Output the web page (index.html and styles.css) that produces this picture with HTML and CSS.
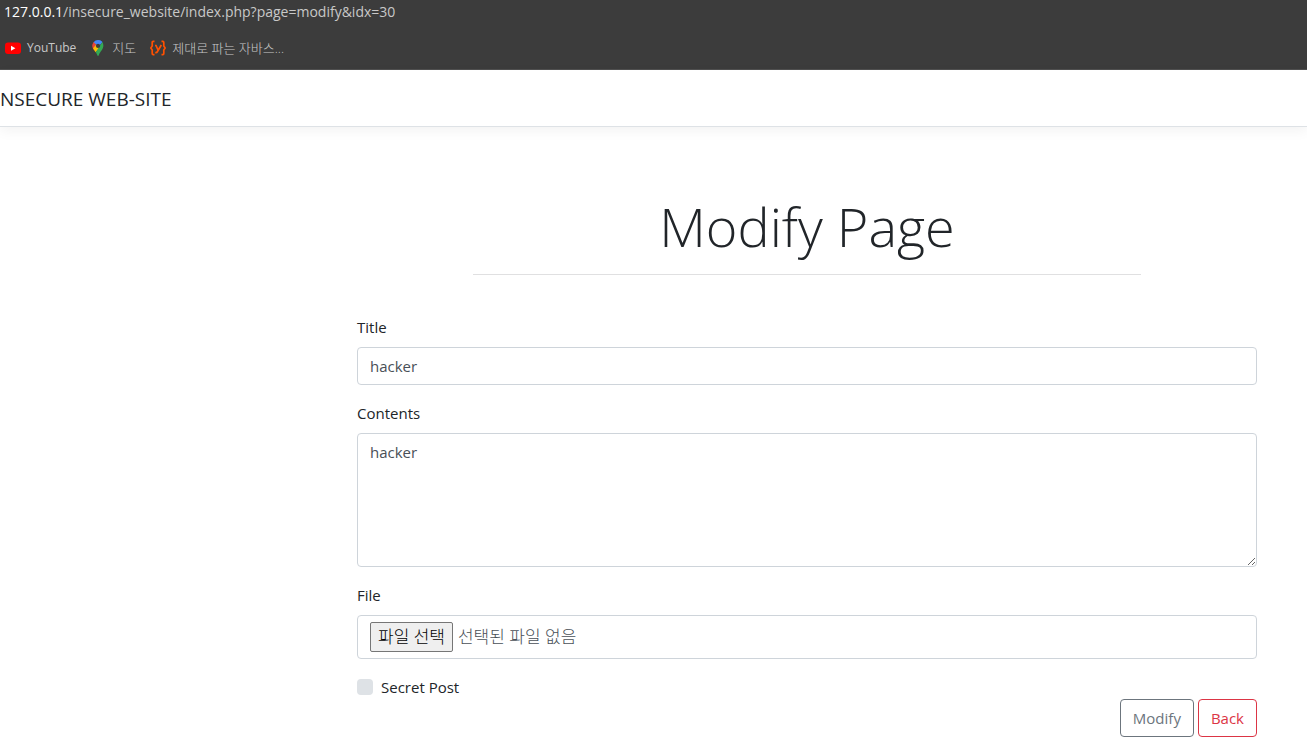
FILE: index.html
```html
<!DOCTYPE html>
<html lang="ko">
<head>
<meta charset="utf-8">
<title>Modify Page</title>
<link rel="stylesheet" href="styles.css">
</head>
<body>
<header class="browser">
  <div class="address"><span class="host">127.0.0.1</span>/insecure_website/index.php?page=modify&amp;idx=30</div>
  <nav class="bookmarks">
    <a class="bookmark" href="#">
      <svg width="16" height="16" viewBox="0 0 16 16" aria-hidden="true"><rect y="2.5" width="16" height="11.5" rx="3" fill="#f00"/><path d="M6 5.8v5l4.4-2.5z" fill="#fff"/></svg>
      YouTube</a>
    <a class="bookmark korean" href="#">
      <svg width="16" height="16" viewBox="0 0 16 16" aria-hidden="true">
        <path d="M3.6 2.3 8 5.5 4 10C3 8.600 2.500 7.500 2.500 5.900A5.500 5.500 0 0 1 3.600 2.300z" fill="#ea4335"/>
        <path d="M3.600 2.300A5.600 5.600 0 0 1 12.300 2L6 8.500z" fill="#4285f4"/>
        <path d="M3.600 2.300 6.300 4.600 3.100 8.400A6 6 0 0 1 3.600 2.300z" fill="#ea4335"/>
        <path d="M3 8.300 6.300 4.600 9.700 7.700 5.700 12.200C4.700 10.800 3.600 9.600 3 8.300z" fill="#fbbc04"/>
        <path d="M12.300 2C14.200 5 13.300 8.200 11.700 10.300 10 12.500 9.300 13.500 8.800 15.200Q8 16.800 7.300 15.200C7 14 6.400 13.100 5.700 12.200z" fill="#34a853"/>
        <path d="M8 .2Q11 .3 12.300 2L9.500 5.500 6.300 4.600z" fill="#4285f4"/>
        <circle cx="8" cy="5.900" r="2.100" fill="#3d3d3d"/>
      </svg>
      지도</a>
    <a class="bookmark korean" href="#">
      <svg width="16" height="16" viewBox="0 0 16 16" fill="none" stroke="#ff5000" stroke-width="1.700" aria-hidden="true"><path d="M4.500 1.300H3.200Q2.200 1.300 2.200 2.500V6L.8 8l1.400 2v3.500q0 1.200 1 1.200h1.300M11.500 1.300h1.300q1 0 1 1.200V6l1.400 2-1.400 2v3.500q0 1.200-1 1.200h-1.300M5 5.500h1l2 4.300M11.300 5 7.500 11.500q-.7 1.300-2.300 1"/></svg>
      제대로 파는 자바스...</a>
  </nav>
</header>
<div class="navbar"><a class="brand" href="#">NSECURE WEB-SITE</a></div>
<main class="page">
  <h1 class="heading">Modify Page</h1>
  <hr class="rule">
  <form class="form">
    <div class="field">
      <label for="title">Title</label>
      <input class="control" id="title" type="text" value="hacker">
    </div>
    <div class="field">
      <label for="contents">Contents</label>
      <textarea class="control contents" id="contents">hacker</textarea>
    </div>
    <div class="field">
      <label for="file">File</label>
      <label class="control picker">
        <input class="picker-input" id="file" type="file">
        <span class="picker-button">파일 선택</span>
        <span>선택된 파일 없음</span>
      </label>
    </div>
    <div class="check">
      <input class="checkbox" id="secret" type="checkbox">
      <label for="secret">Secret Post</label>
    </div>
    <div class="actions">
      <button class="button" type="submit">Modify</button>
      <button class="button danger" type="button">Back</button>
    </div>
  </form>
</main>
</body>
</html>
```

FILE: styles.css
```css
* {
  box-sizing: border-box;
}

body {
  margin: 0;
  background: #fff;
  color: #212529;
  font: 15px/24px "Open Sans", "Noto Sans CJK KR", sans-serif;
}

a {
  color: inherit;
  text-decoration: none;
}

.browser {
  height: 70px;
  background: #3c3c3c;
  border-bottom: 1px solid #505050;
  color: #c8c8c8;
}

.address {
  padding-left: 4px;
  font-size: 14px;
}

.host {
  color: #fff;
}

.bookmarks {
  display: flex;
  gap: 14px;
  padding: 12px 5px;
  font-size: 12px;
}

.bookmark {
  display: flex;
  align-items: center;
  gap: 6px;
}

.korean {
  font-size: 13px;
  font-weight: 300;
}

.navbar {
  padding: 15px 0 13px;
  border-bottom: 1px solid #dee2e6;
  box-shadow: 0 4px 12px rgba(0, 0, 0, 0.05);
}

.brand {
  display: block;
  font-size: 19px;
  line-height: 28px;
}

.page {
  padding: 65px 50px 16px 357px;
}

.heading {
  margin: 0;
  font-size: 54px;
  font-weight: 300;
  line-height: 68px;
  text-align: center;
}

.rule {
  margin: 14px 116px 40px;
  border: 0;
  border-top: 1px solid #e0e0e1;
}

.form {
  display: flex;
  flex-direction: column;
  gap: 16px;
}

.field {
  display: flex;
  flex-direction: column;
  gap: 8px;
}

.control {
  width: 100%;
  padding: 6px 12px;
  border: 1px solid #ced4da;
  border-radius: 4px;
  background: #fff;
  color: #495057;
  font: inherit;
}

.contents {
  display: block;
  height: 134px;
  resize: vertical;
}

.picker {
  position: relative;
  display: flex;
  align-items: center;
  gap: 5px;
  font-size: 17px;
  font-weight: 300;
}

.picker-input {
  position: absolute;
  width: 1px;
  height: 1px;
  opacity: 0;
}

.picker-button {
  padding: 2px 7px;
  border: 1px solid #767676;
  border-radius: 2px;
  background: #efefef;
  color: #000;
}

.check {
  display: flex;
  align-items: center;
  gap: 8px;
}

.checkbox {
  appearance: none;
  width: 16px;
  height: 16px;
  margin: 0;
  border-radius: 4px;
  background: #dee2e6;
}

.checkbox:checked {
  background: #0d6efd;
}

.actions {
  display: flex;
  justify-content: flex-end;
  gap: 4px;
  margin-top: -16px;
}

.button {
  padding: 6px 12px;
  border: 1px solid #6c757d;
  border-radius: 4px;
  background: #fff;
  color: #6c757d;
  font: inherit;
}

.danger {
  border-color: #dc3545;
  color: #dc3545;
}
```
